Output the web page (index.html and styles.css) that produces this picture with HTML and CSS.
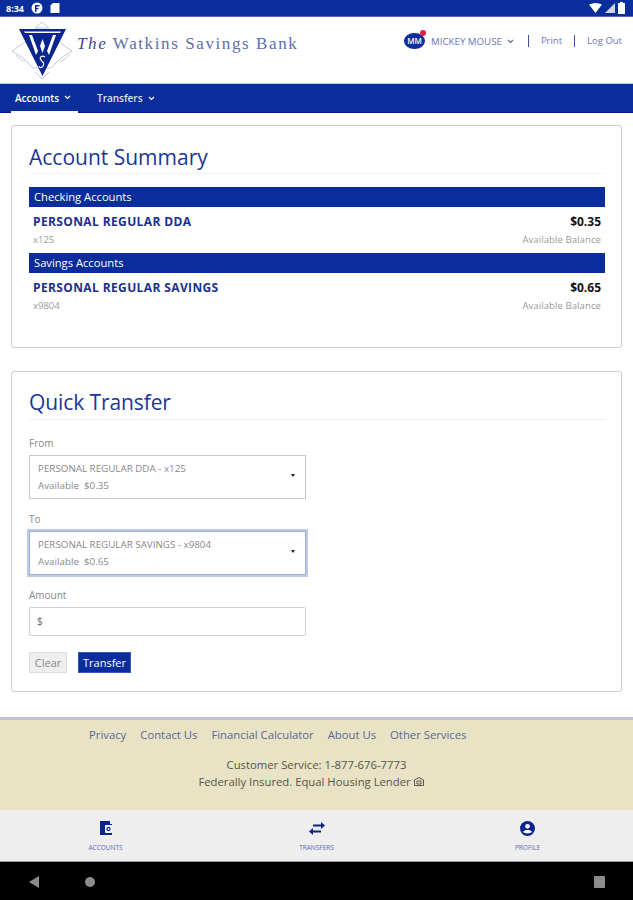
FILE: index.html
```html
<!DOCTYPE html>
<html lang="en">
<head>
    <meta charset="UTF-8">
    <meta name="viewport" content="width=device-width, initial-scale=1.0">
    <title>The Watkins Savings Bank</title>
    <link rel="stylesheet" href="styles.css">
</head>
<body>

<div class="status-bar">
    <div class="status-left">
        <span class="status-time">8:34</span>
        <svg class="status-icon" width="12" height="12" viewBox="0 0 12 12"><circle cx="6" cy="6" r="5.500" fill="#fff"/><path d="M4 3h4.500v1.500H5.500V6H7.500v1.300H5.500V10H4z" fill="#0a2d9c"/></svg>
        <svg class="status-icon" width="10" height="12" viewBox="0 0 10 12"><path d="M3 1h6.500v10H.5V3.500z" fill="#fff"/></svg>
    </div>
    <div class="status-right">
        <svg width="13" height="10" viewBox="0 0 13 10"><path d="M0 1.500Q6.500-1.500 13 1.500L6.500 10z" fill="#fff"/></svg>
        <svg width="10" height="10" viewBox="0 0 10 10"><path d="M10 0v10H0z" fill="#cfd4e6"/></svg>
        <svg width="7" height="12" viewBox="0 0 7 12"><path d="M2 0h3v1h2v11H0V1h2z" fill="#fff"/></svg>
    </div>
</div>

<header class="top-header">
    <div class="brand">
        <svg class="brand-logo" width="62" height="58" viewBox="0 0 62 58">
            <path d="M1 29L14 20 48 20 61 29 50 36 40 46 22 46 12 36z" fill="none" stroke="#c3c8e0" stroke-width="1"/>
            <path d="M31 0L38 6 24 6z" fill="none" stroke="#c3c8e0" stroke-width="1"/>
            <path d="M8 7H55L31.500 54z" fill="#0a2490"/>
            <path d="M13 9.500H50L49 11H14z" fill="#fff"/>
            <path d="M18 13L21 13 27 29 25 33z M45 13L42 13 36 29 38 33z" fill="#fff"/>
            <path d="M31.500 17L29 24 31.500 31 34 24z" fill="#fff"/>
            <path d="M34 35c-3-2-6 0-4 3s4 3 2 6-4 1-4 0" fill="none" stroke="#fff" stroke-width="1.200"/>
            <path d="M5 33c3 3 5 6 9 6M58 33c-3 3-5 6-9 6M24 50l7 7 7-7" fill="none" stroke="#c3c8e0" stroke-width="1"/>
        </svg>
        <div class="brand-name"><em>The</em> Watkins Savings Bank</div>
    </div>
    <div class="user-links">
        <div class="user-menu">
            <span class="avatar">MM<i class="avatar-dot"></i></span>
            <span class="user-name">MICKEY MOUSE</span>
            <svg class="chev" width="7" height="5" viewBox="0 0 7 5"><path d="M1 1l2.500 2.500L6 1" fill="none" stroke="#5c6bac" stroke-width="1.200"/></svg>
        </div>
        <a class="top-link">Print</a>
        <a class="top-link">Log Out</a>
    </div>
</header>

<nav class="main-nav">
    <a class="nav-item active">Accounts
        <svg width="7" height="5" viewBox="0 0 7 5"><path d="M1 1l2.500 2.500L6 1" fill="none" stroke="#fff" stroke-width="1.200"/></svg>
    </a>
    <a class="nav-item">Transfers
        <svg width="7" height="5" viewBox="0 0 7 5"><path d="M1 1l2.500 2.500L6 1" fill="none" stroke="#fff" stroke-width="1.200"/></svg>
    </a>
</nav>

<main class="content">
    <section class="card card-summary">
        <h1 class="card-title">Account Summary</h1>

        <div class="group-head">Checking Accounts</div>
        <div class="acct-row">
            <div class="acct-main"><span class="acct-name">PERSONAL REGULAR DDA</span><span class="acct-bal">$0.35</span></div>
            <div class="acct-sub"><span>x125</span><span class="acct-avail">Available Balance</span></div>
        </div>

        <div class="group-head">Savings Accounts</div>
        <div class="acct-row">
            <div class="acct-main"><span class="acct-name">PERSONAL REGULAR SAVINGS</span><span class="acct-bal">$0.65</span></div>
            <div class="acct-sub"><span>x9804</span><span class="acct-avail">Available Balance</span></div>
        </div>
    </section>

    <section class="card card-transfer">
        <h1 class="card-title">Quick Transfer</h1>

        <label class="field-label">From</label>
        <div class="select-box">
            <div>
                <div class="select-line">PERSONAL REGULAR DDA - x125</div>
                <div class="select-line">Available&nbsp; $0.35</div>
            </div>
            <i class="caret"></i>
        </div>

        <label class="field-label">To</label>
        <div class="select-box focused">
            <div>
                <div class="select-line">PERSONAL REGULAR SAVINGS - x9804</div>
                <div class="select-line">Available&nbsp; $0.65</div>
            </div>
            <i class="caret"></i>
        </div>

        <label class="field-label">Amount</label>
        <div class="amount-box">$</div>

        <div class="buttons">
            <button class="btn btn-clear">Clear</button>
            <button class="btn btn-transfer">Transfer</button>
        </div>
    </section>
</main>

<footer class="site-footer">
    <div class="footer-links">
        <a>Privacy</a>
        <a>Contact Us</a>
        <a>Financial Calculator</a>
        <a>About Us</a>
        <a>Other Services</a>
    </div>
    <div class="footer-text">Customer Service: 1-877-676-7773</div>
    <div class="footer-text footer-lender">Federally Insured. Equal Housing Lender
        <svg width="10" height="9" viewBox="0 0 10 9"><path d="M5 .5L9.500 3v5.500H.5V3z M3 4v3h4V4z" fill="none" stroke="#55554a" stroke-width="1"/></svg>
    </div>
</footer>

<div class="tab-bar">
    <div class="tab">
        <svg width="14" height="15" viewBox="0 0 14 15"><path d="M1 0h10v3h2v11H1z" fill="#0a2490"/><rect x="6" y="4" width="7" height="8" rx="1" fill="#fff"/><circle cx="9.500" cy="8" r="2.200" fill="#0a2490"/><circle cx="9.500" cy="8" r="1" fill="#fff"/></svg>
        <span>ACCOUNTS</span>
    </div>
    <div class="tab">
        <svg width="16" height="15" viewBox="0 0 16 15"><path d="M4 3.500h8V1l4 3.500L12 8V5.500H4z M12 9.500H4V7L0 10.500 4 14v-2.500h8z" fill="#0a2490"/></svg>
        <span>TRANSFERS</span>
    </div>
    <div class="tab">
        <svg width="15" height="15" viewBox="0 0 15 15"><circle cx="7.500" cy="7.500" r="7.500" fill="#0a2490"/><circle cx="7.500" cy="5.300" r="2.400" fill="#fff"/><path d="M3 11c1.600-2.600 7.400-2.600 9 0-1.600 1.900-7.400 1.900-9 0z" fill="#fff"/></svg>
        <span>PROFILE</span>
    </div>
</div>

<div class="system-nav">
    <div class="sys-left">
        <svg width="10" height="12" viewBox="0 0 10 12"><path d="M10 0v12L0 6z" fill="#8c8c8c"/></svg>
        <svg width="10" height="10" viewBox="0 0 10 10"><circle cx="5" cy="5" r="5" fill="#8c8c8c"/></svg>
    </div>
    <svg width="11" height="12" viewBox="0 0 11 12"><rect width="11" height="12" rx="1" fill="#8c8c8c"/></svg>
</div>

</body>
</html>
```

FILE: styles.css
```css
* {
    box-sizing: border-box;
}

body {
    margin: 0;
    width: 633px;
    height: 900px;
    overflow: hidden;
    background: #fff;
    font-family: "Open Sans", "Liberation Sans", sans-serif;
    color: #666;
}

.status-bar {
    height: 17px;
    background: #0a2d9c;
    border-bottom: 1px solid #5468b8;
    display: flex;
    justify-content: space-between;
    align-items: center;
    padding: 0 8px 0 6px;
    color: #fff;
}

.status-left, .status-right {
    display: flex;
    align-items: center;
    gap: 3px;
}

.status-left {
    gap: 7px;
}

.status-time {
    font-size: 9px;
    font-weight: 700;
}

.top-header {
    height: 67px;
    display: flex;
    justify-content: space-between;
    padding: 5px 11px 0 11px;
    border-bottom: 1px solid #c4cae2;
}

.brand {
    display: flex;
    align-items: flex-start;
    gap: 4px;
}

.brand-name {
    margin-top: 12px;
    font-family: "Liberation Serif", serif;
    font-size: 17px;
    letter-spacing: 1.600px;
    color: #5f6dab;
}

.brand-name em {
    color: #3c4a92;
}

.user-links {
    display: flex;
    align-items: flex-start;
    padding-top: 10px;
    font-size: 9.500px;
}

.user-menu {
    display: flex;
    align-items: center;
    gap: 6px;
    height: 18px;
    color: #6a76b0;
}

.avatar {
    position: relative;
    width: 21px;
    height: 16px;
    border-radius: 50%;
    background: #0a2d9c;
    color: #fff;
    font-size: 8px;
    font-weight: 600;
    line-height: 16px;
    text-align: center;
}

.avatar-dot {
    position: absolute;
    top: -3px;
    right: -1px;
    width: 6px;
    height: 6px;
    border-radius: 50%;
    background: #e0233a;
}

.user-name {
    font-size: 9.700px;
}

.chev {
    margin-left: -1px;
}

.top-link {
    margin-left: 14px;
    padding-left: 12px;
    height: 12px;
    line-height: 12px;
    margin-top: 3px;
    border-left: 1px solid #3d4f9f;
    color: #6b78b2;
}

.top-link + .top-link {
    margin-left: 12px;
}

.main-nav {
    height: 29px;
    background: #0a2d9c;
    border-bottom: 1px solid #00178a;
    display: flex;
    padding-left: 11px;
}

.nav-item {
    display: flex;
    align-items: center;
    gap: 5px;
    padding: 0 4px;
    margin-right: 15px;
    color: #dfe3f3;
    font-size: 10px;
    font-weight: 600;
}

.nav-item.active {
    color: #fff;
    box-shadow: 0 2px 0 #fff;
    height: 28px;
    width: 67px;
    border-bottom: 1px solid #fff;
}

.content {
    height: 604px;
    padding: 12px 11px 0;
}

.card {
    border: 1px solid #c6c9e2;
    border-radius: 3px;
    padding: 0 16px 0 17px;
    background: #fff;
}

.card-summary {
    height: 223px;
    margin-bottom: 23px;
}

.card-transfer {
    height: 321px;
}

.card-title {
    margin: 0;
    height: 48px;
    padding-top: 17px;
    font-size: 21px;
    line-height: 28px;
    font-weight: 400;
    color: #1c3596;
    border-bottom: 1px solid #f0f0f2;
}

.card-summary .card-title {
    margin-bottom: 13px;
    border-bottom-color: #f4f4f6;
}

.card-transfer .card-title {
    padding-top: 16px;
    letter-spacing: -0.100px;
    margin-bottom: 17px;
}

.group-head {
    height: 20px;
    background: #0a2d9c;
    color: #fff;
    font-size: 11.200px;
    line-height: 20px;
    padding-left: 5px;
}

.acct-row {
    height: 46px;
    padding: 6px 4px 0;
}

.acct-main, .acct-sub {
    display: flex;
    justify-content: space-between;
}

.acct-main {
    height: 17px;
    line-height: 17px;
}

.acct-name {
    font-size: 12px;
    font-weight: 700;
    letter-spacing: 0.380px;
    color: #1a2f8f;
}

.acct-bal {
    font-size: 12px;
    font-weight: 700;
    color: #111;
}

.acct-sub {
    margin-top: 3px;
    font-size: 9.500px;
    line-height: 14px;
    color: #999;
}

.acct-avail {
    letter-spacing: 0.100px;
}

.field-label {
    display: block;
    font-size: 10px;
    line-height: 12px;
    color: #888;
}

.select-box {
    width: 277px;
    height: 44px;
    margin-top: 6px;
    margin-bottom: 14px;
    border: 1px solid #c9c9c9;
    display: flex;
    justify-content: space-between;
    align-items: center;
    padding: 0 10px 0 8px;
}

.select-box.focused {
    border-color: #9fb0da;
    box-shadow: 0 0 0 2px #bfcae6;
}

.select-line {
    font-size: 9.800px;
    line-height: 17px;
    color: #888;
}

.caret {
    width: 0;
    height: 0;
    border-left: 2.500px solid transparent;
    border-right: 2.500px solid transparent;
    border-top: 3px solid #222;
    margin-bottom: 4px;
}

.amount-box {
    width: 277px;
    height: 29px;
    margin-top: 6px;
    border: 1px solid #cfcfcf;
    border-radius: 2px;
    padding-left: 7px;
    font-size: 10px;
    line-height: 27px;
    color: #666;
}

.buttons {
    display: flex;
    gap: 11px;
    margin-top: 16px;
}

.btn {
    height: 21px;
    border: 1px solid #ddd;
    padding: 0;
    font-family: inherit;
    font-size: 11px;
}

.btn-clear {
    width: 38px;
    background: #eee;
    color: #888;
}

.btn-transfer {
    width: 53px;
    background: #0a2d9c;
    border-color: #3a55b5;
    color: #fff;
}

.site-footer {
    height: 93px;
    background: #e8e3c4;
    border-top: 3px solid #c2c2d6;
    padding-top: 7px;
    text-align: center;
    font-size: 11.300px;
    color: #55554a;
}

.footer-links {
    display: flex;
    gap: 14px;
    padding-left: 89px;
    color: #5a6799;
    line-height: 16px;
    margin-bottom: 13px;
}

.footer-text {
    line-height: 17px;
}

.footer-lender {
    padding-right: 11px;
}

.tab-bar {
    height: 52px;
    background: #eeeeef;
    border-bottom: 1px solid #999;
    display: flex;
    padding-top: 11px;
}

.tab {
    flex: 1;
    display: flex;
    flex-direction: column;
    align-items: center;
    gap: 8px;
    font-size: 6.500px;
    line-height: 8px;
    color: #5f6cb0;
}

.system-nav {
    height: 39px;
    background: #000;
    display: flex;
    justify-content: space-between;
    align-items: center;
    padding: 0 28px 0 29px;
}

.sys-left {
    display: flex;
    align-items: center;
    gap: 46px;
}
```
